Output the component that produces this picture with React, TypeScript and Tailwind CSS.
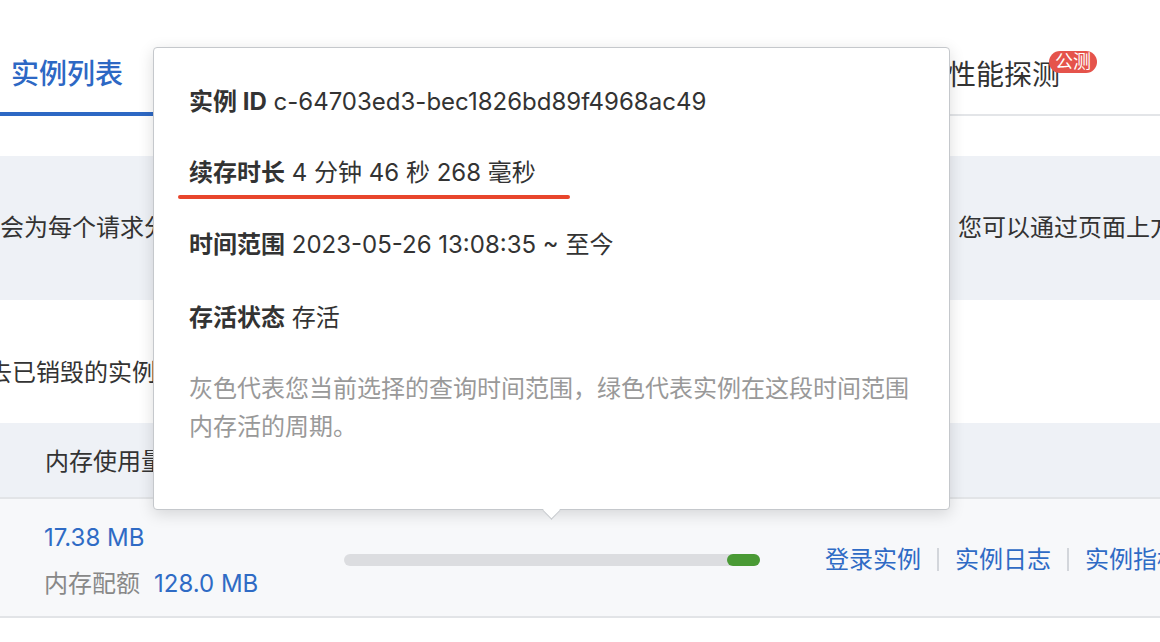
import React from "react";

const font = { fontFamily: '"Inter", "Noto Sans CJK SC", "Noto Sans", sans-serif' };

export default function App() {
  return (
    <div
      className="relative w-[1160px] h-[642px] overflow-hidden bg-white text-[#333]"
      style={font}
    >
      {/* Tabs */}
      <div className="h-[116px] border-b-2 border-[#e3e5e8] flex items-end">
        <div className="w-[165px] shrink-0 h-[80px] pl-[11px] -mb-[2px] border-b-4 border-[#2d68c4] flex items-center text-[28px] font-medium text-[#2d68c4] leading-none whitespace-nowrap">
          实例列表
        </div>
        <div className="ml-[783px] shrink-0 h-[78px] -mb-[2px] border-b-4 border-transparent flex items-center text-[28px] text-[#333] leading-none whitespace-nowrap">
          <span className="relative">
            性能探测
            <span className="absolute left-[101px] -top-[10px] h-[22px] px-[6px] rounded-full bg-[#e5534b] text-white text-[18px] leading-[22px]">
              公测
            </span>
          </span>
        </div>
      </div>

      <div className="h-[40px]" />

      {/* Notice band */}
      <div className="h-[144px] bg-[#eef1f6] flex items-center whitespace-nowrap text-[24px] leading-[36px] text-[#333]">
        <span className="w-[958px] shrink-0 overflow-hidden">
          会为每个请求分配一个实例，实例在空闲一段时间后会被自动销毁回收。
        </span>
        <span className="shrink-0">您可以通过页面上方的时间选择器查看</span>
      </div>

      {/* White area */}
      <div className="h-[123px] pt-[55px] whitespace-nowrap text-[24px] leading-[36px] text-[#333]">
        <span className="-ml-[12px]">去已销毁的实例，默认展示最近的实例</span>
      </div>

      {/* Table header */}
      <div className="h-[74px] bg-[#eef1f6] pl-[45px] pt-[4px] flex items-center text-[24px] leading-[36px] text-[#333] whitespace-nowrap">
        内存使用量
      </div>
      <div className="h-[2px] bg-[#e2e4e7]" />

      {/* Row */}
      <div className="h-[119px] pt-[4px] bg-[#f7f8fa] border-b-2 border-[#e2e4e7] flex items-center whitespace-nowrap text-[24px] leading-[36px]">
        <div className="w-[344px] shrink-0 pl-[44px] flex flex-col gap-[10px] pt-[2px]">
          <span className="text-[#2f6bc5]">17.38 MB</span>
          <span>
            <span className="text-[#888]">内存配额</span>
            <span className="ml-[14px] text-[#2f6bc5]">128.0 MB</span>
          </span>
        </div>
        <div className="w-[416px] shrink-0 h-[12px] rounded-full bg-[#dcdde0] flex justify-end">
          <div className="w-[33px] h-[12px] rounded-full bg-[#4a9a35]" />
        </div>
        <div className="ml-[65px] shrink-0 flex items-center text-[#2f6bc5]">
          <span>登录实例</span>
          <span className="mx-[16px] w-[2px] h-[23px] bg-[#d3d6db]" />
          <span>实例日志</span>
          <span className="mx-[16px] w-[2px] h-[23px] bg-[#d3d6db]" />
          <span>实例指标</span>
        </div>
      </div>

      {/* Popover */}
      <div className="absolute left-[153px] top-[47px] w-[797px] h-[463px] bg-white border border-[#c5c8cc] rounded-[4px] shadow-[0_4px_16px_rgba(0,0,0,0.14)] px-[35px] pt-[36px] text-[24px] text-[#333]">
        <div className="relative leading-[36px] whitespace-nowrap">
          <span className="font-bold">实例 ID</span> c-64703ed3-bec1826bd89f4968ac49
        </div>
        <div className="relative mt-[35px] leading-[36px] whitespace-nowrap">
          <span className="font-bold">续存时长</span> 4 分钟 46 秒 268 毫秒
          <div className="absolute -left-[11px] top-[40px] w-[392px] h-[4px] rounded-full bg-[#e8452c]" />
        </div>
        <div className="mt-[36px] leading-[36px] whitespace-nowrap">
          <span className="font-bold">时间范围</span> 2023-05-26 13:08:35 ~ 至今
        </div>
        <div className="mt-[37px] leading-[36px] whitespace-nowrap">
          <span className="font-bold">存活状态</span> 存活
        </div>
        <p className="mt-[34px] leading-[38px] text-[#999]">
          灰色代表您当前选择的查询时间范围，绿色代表实例在这段时间范围内存活的周期。
        </p>
        <div className="absolute left-[391px] -bottom-[8px] w-[13px] h-[13px] rotate-45 bg-white border-r border-b border-[#c5c8cc]" />
      </div>
    </div>
  );
}
